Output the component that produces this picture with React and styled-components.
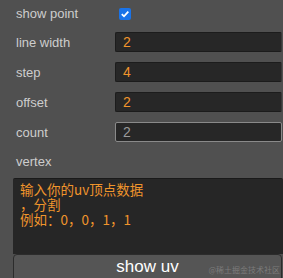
import React from 'react'
import styled, { createGlobalStyle } from 'styled-components'

const Global = createGlobalStyle`
    html, body {
        margin:0;
        padding:0;
        background:#505050;
    }
    body {
        font-family:"Liberation Sans", Arial, sans-serif;
    }
`

const Panel = styled.div`
    width:283px;
    height:278px;
    position:relative;
    overflow:hidden;
    background:#505050;
    display:flex;
    flex-direction:column;
`

const Row = styled.div`
    height:${props => props.h}px;
    display:flex;
    align-items:center;
    padding-right:1px;
    flex-shrink:0;
`

const Label = styled.span`
    width:99px;
    padding-left:16px;
    font-size:13px;
    color:#cdcdcd;
    flex-shrink:0;
`

const Check = styled.span`
    width:12px;
    height:12px;
    margin-left:4px;
    border-radius:2px;
    background:#1a73e8;
    display:flex;
    align-items:center;
    justify-content:center;
`

const NumInput = styled.input`
    flex:1;
    min-width:0;
    height:20px;
    box-sizing:border-box;
    padding:0 7px;
    border-radius:2px;
    background:#272727;
    border:1px solid ${props => props.disabled ? '#8a8a8a' : '#1c1c1c'};
    border-right-color:${props => props.disabled ? '#8a8a8a' : '#3a3a3a'};
    color:${props => props.disabled ? '#9a9a9a' : '#f0952c'};
    font-family:"Liberation Sans", Arial, sans-serif;
    font-size:14px;
    outline:none;
    :disabled{
        opacity:1;
    }
`

const Area = styled.textarea`
    margin:2px 0 0 13px;
    width:270px;
    height:76px;
    flex-shrink:0;
    box-sizing:border-box;
    resize:none;
    overflow:hidden;
    padding:3px 7px;
    background:#262626;
    border:none;
    border-top:1px solid #1a1a1a;
    border-radius:2px 2px 0 0;
    color:#f0952c;
    font-family:"Noto Sans CJK SC", "Liberation Mono", monospace;
    font-size:13.5px;
    line-height:15px;
    outline:none;
`

const ShowButton = styled.button`
    margin:0 0 0 13px;
    width:269px;
    height:28px;
    flex-shrink:0;
    box-sizing:border-box;
    background:#555555;
    border:1px solid #2c2c2c;
    border-radius:4px;
    color:#ffffff;
    font-family:"Liberation Sans", Arial, sans-serif;
    font-size:17px;
    padding:0 0 2px;
`

const Mark = styled.span`
    position:absolute;
    right:3px;
    bottom:3px;
    font-size:8px;
    color:rgba(200,200,200,0.35);
    font-family:"Noto Sans CJK SC", sans-serif;
`

const fields = [
    { label: 'line width', value: '2' },
    { label: 'step', value: '4' },
    { label: 'offset', value: '2' },
    { label: 'count', value: '2', disabled: true },
]

const App = () => {
    return (
        <Panel>
            <Global />
            <Row h={27}>
                <Label>show point</Label>
                <Check>
                    <svg width="10" height="10" viewBox="0 0 10 10">
                        <path d="M1.8 5.2 L4 7.3 L8.3 2.6" stroke="#fff" strokeWidth="1.8" fill="none" />
                    </svg>
                </Check>
            </Row>
            {fields.map(f => (
                <Row h={30} key={f.label}>
                    <Label>{f.label}</Label>
                    <NumInput defaultValue={f.value} disabled={f.disabled} />
                </Row>
            ))}
            <Row h={29}>
                <Label>vertex</Label>
            </Row>
            <Area defaultValue={'输入你的uv顶点数据\n，分割\n例如：0，0，1，1'} />
            <ShowButton>show uv</ShowButton>
            <Mark>@稀土掘金技术社区</Mark>
        </Panel>
    )
}

export default App
